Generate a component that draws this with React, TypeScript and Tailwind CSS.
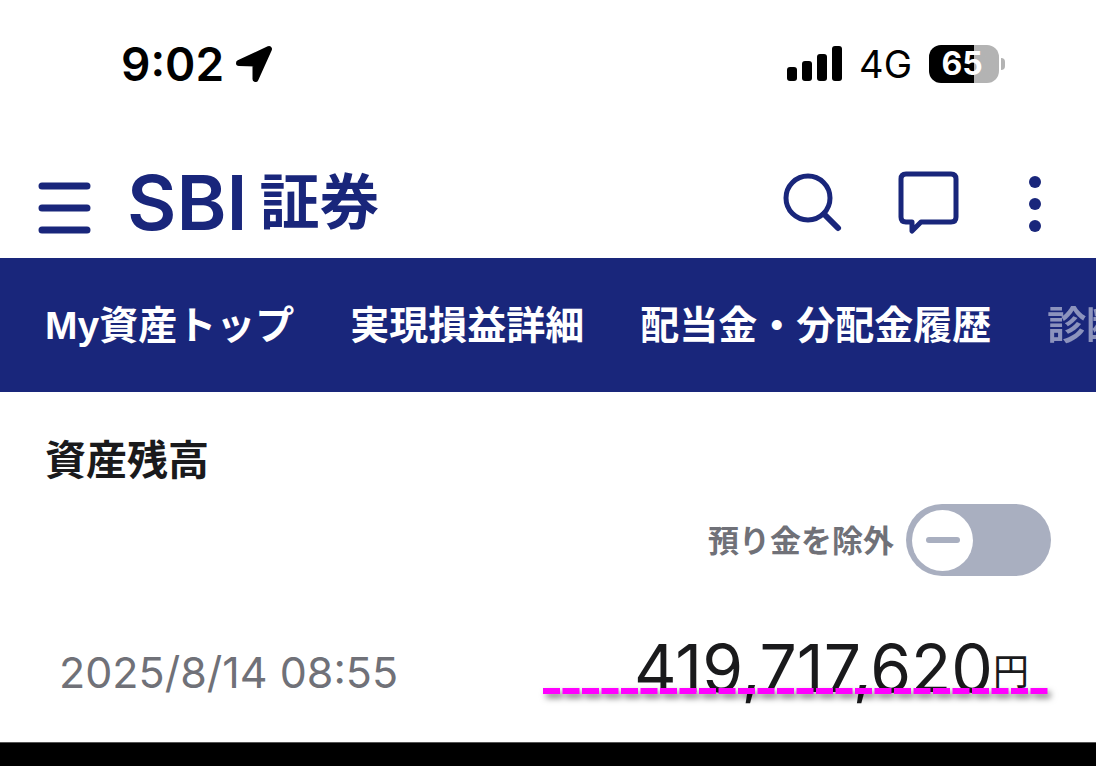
import { useState } from "react"

const TABS = ["My資産トップ", "実現損益詳細", "配当金・分配金履歴", "診断"]

function StatusBar() {
    return (
        <div className="flex h-32 items-center justify-between pl-[121px] pr-[91px] text-black">
            <div className="flex items-center gap-3">
                <time className="text-[46px] leading-none font-semibold">9:02</time>
                <svg width="38" height="38" viewBox="0 0 38 38" aria-hidden="true">
                    <path
                        d="M3 18 33 4 19.5 34V18.5Z"
                        fill="currentColor"
                        stroke="currentColor"
                        strokeWidth="6"
                        strokeLinejoin="round"
                    />
                </svg>
            </div>
            <div className="flex items-center gap-[17px]">
                <svg width="55" height="36" viewBox="0 0 55 36" fill="currentColor" aria-hidden="true">
                    <rect x="0" y="21" width="10" height="14" rx="3" />
                    <rect x="15" y="15" width="10" height="20" rx="3" />
                    <rect x="30" y="8" width="10" height="27" rx="3" />
                    <rect x="45" y="0" width="10" height="35" rx="3" />
                </svg>
                <span className="text-[38px] leading-none">4G</span>
                <div className="flex items-center gap-[2px]">
                    <div className="flex h-[38px] w-[70px] items-center justify-center rounded-[12px] bg-linear-to-r from-black from-65% to-[#b3b3b3] to-65% pr-1 text-[32px] leading-none font-bold text-white">
                        65
                    </div>
                    <div className="h-3 w-1 rounded-r-full bg-[#b3b3b3]" />
                </div>
            </div>
        </div>
    )
}

function Header() {
    return (
        <header className="flex h-[130px] items-center justify-between pt-[18px] pr-[36px] pl-[38px] text-[#19267b]">
            <div className="flex items-center gap-9">
                <button type="button" aria-label="メニュー" className="mt-3">
                    <svg width="53" height="54" viewBox="0 0 53 54" stroke="currentColor" strokeWidth="7" strokeLinecap="round">
                        <path d="M4 5H49M4 27H49M4 49H49" />
                    </svg>
                </button>
                <a href="#" className="flex items-center gap-3">
                    <span className="text-[76px] leading-none font-semibold">SBI</span>
                    <span className="text-[60px] leading-none font-bold">証券</span>
                </a>
            </div>
            <div className="flex items-center">
                <button type="button" aria-label="検索" className="mr-[55px]">
                    <svg width="60" height="62" viewBox="0 0 60 62" fill="none" stroke="currentColor" strokeLinecap="round">
                        <circle cx="25" cy="27" r="22" strokeWidth="5" />
                        <path d="M41 43 55 57" strokeWidth="6" />
                    </svg>
                </button>
                <button type="button" aria-label="メッセージ" className="mr-[50px]">
                    <svg width="62" height="66" viewBox="0 0 62 66" fill="none" stroke="currentColor" strokeWidth="5" strokeLinejoin="round">
                        <path d="M8 5H53Q58 5 58 10V48Q58 53 53 53H23L14 62V53H8Q3 53 3 48V10Q3 5 8 5Z" />
                    </svg>
                </button>
                <button type="button" aria-label="その他" className="mt-1">
                    <svg width="50" height="58" viewBox="0 0 50 58" fill="currentColor">
                        <circle cx="25" cy="7" r="6" />
                        <circle cx="25" cy="29" r="6" />
                        <circle cx="25" cy="51" r="6" />
                    </svg>
                </button>
            </div>
        </header>
    )
}

export default function App() {
    const [exclude, setExclude] = useState(false)

    return (
        <div className="flex min-h-screen flex-col overflow-hidden bg-white font-['Inter','Noto_Sans_CJK_JP',sans-serif]">
            <StatusBar />
            <Header />
            <nav className="flex h-[134px] items-center gap-14 overflow-hidden bg-[#19267b] pl-[45px] font-['Liberation_Sans','Noto_Sans_CJK_JP',sans-serif] text-[39px] leading-none font-bold whitespace-nowrap text-white">
                {TABS.map((tab, i) => (
                    <a key={tab} href="#" className={i === TABS.length - 1 ? "opacity-50" : ""}>
                        {tab}
                    </a>
                ))}
            </nav>
            <main className="flex-grow px-[45px] pt-12 text-[#1a1a1c]">
                <h1 className="text-[41px] leading-10 font-bold">資産残高</h1>
                <label className="mt-6 flex cursor-pointer items-center justify-end gap-3">
                    <span className="text-[31px] leading-none font-bold text-[#707178]">預り金を除外</span>
                    <input
                        type="checkbox"
                        role="switch"
                        className="peer sr-only"
                        checked={exclude}
                        onChange={(e) => setExclude(e.target.checked)}
                    />
                    <span className="flex h-[72px] w-[145px] items-center rounded-full bg-[#a9afc0] px-[6px] peer-checked:justify-end peer-checked:bg-[#19267b]">
                        <span className="flex size-[61px] items-center justify-center rounded-full bg-white">
                            <span className="h-[6px] w-[34px] rounded-full bg-[#a9afc0]" />
                        </span>
                    </span>
                </label>
                <div className="mt-14 flex items-center justify-between pl-[14px]">
                    <time className="text-[43px] leading-none text-[#707178]">2025/8/14 08:55</time>
                    <p className="relative flex items-center pr-[22px] leading-20 whitespace-nowrap">
                        <span className="mb-2 text-[66px] leading-18">419,717,620</span>
                        <span className="text-[36px]">円</span>
                        <svg
                            className="absolute right-0 bottom-[18px] drop-shadow-[3px_4px_3px_rgba(0,0,0,0.5)]"
                            width="508"
                            height="6"
                            viewBox="0 0 508 6"
                            aria-hidden="true"
                        >
                            <path d="M0 3H505" stroke="#ff00ff" strokeWidth="6" strokeDasharray="17 2.5" />
                        </svg>
                    </p>
                </div>
            </main>
            <footer className="h-6 border-t border-[#555] bg-black" />
        </div>
    )
}
